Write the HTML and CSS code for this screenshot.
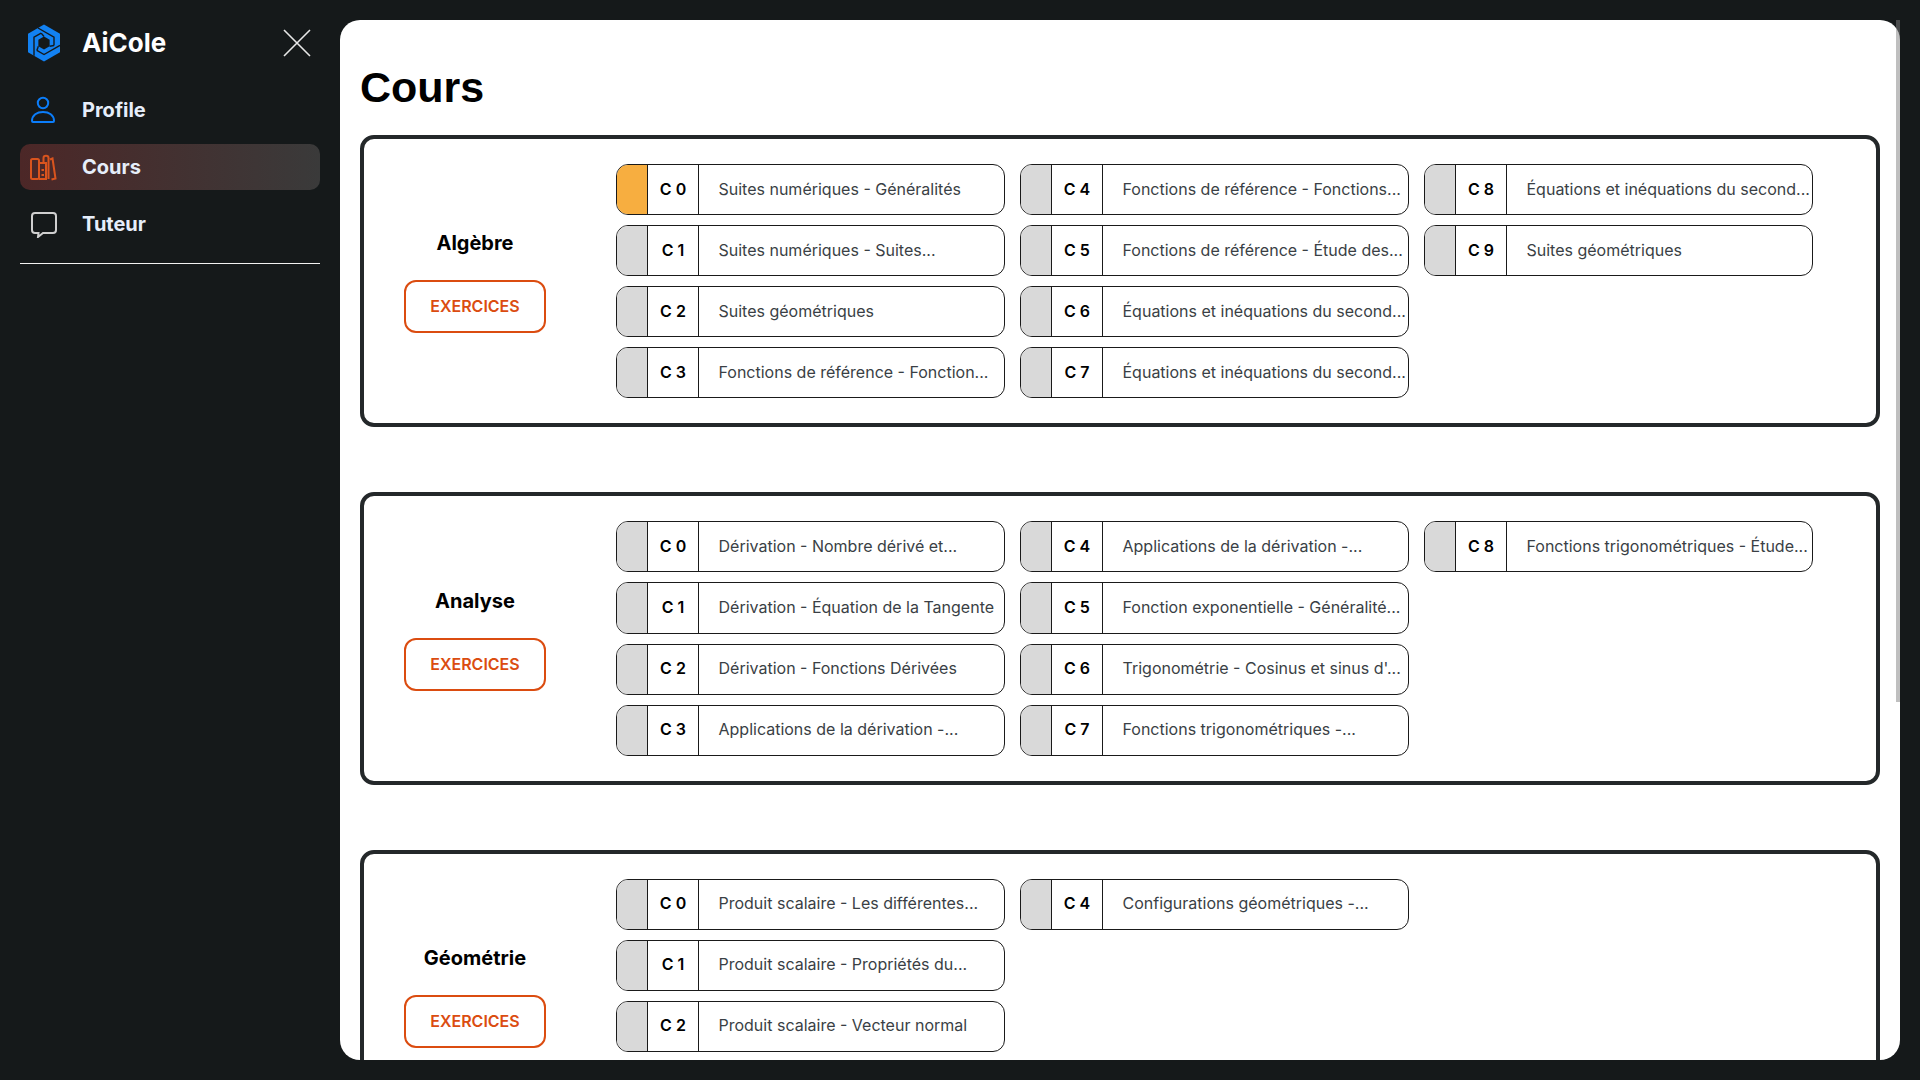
FILE: index.html
```html
<!DOCTYPE html>
<html lang="fr">
<head>
<meta charset="utf-8">
<title>AiCole - Cours</title>
<link rel="stylesheet" href="styles.css">
</head>
<body>
<aside class="sidebar">
  <header class="brand">
    <svg class="logo" viewBox="-20 -20 40 40" aria-hidden="true">
      <path class="logo-hex" d="M0-18.500 16-9.250V9.250L0 18.500-16 9.250V-9.250Z"/>
      <path class="logo-hole" d="M0-6.500 5.630-3.250V3.250L0 6.500-5.630 3.250V-3.250Z"/>
      <g class="logo-slit">
        <path d="M-6-15 10-5.800V2.500"/>
        <path d="M-6-15 10-5.800V2.500" transform="rotate(120)"/>
        <path d="M-6-15 10-5.800V2.500" transform="rotate(240)"/>
        <path d="M10 2.500 5.630 3.250"/>
        <path d="M10 2.500 5.630 3.250" transform="rotate(120)"/>
        <path d="M10 2.500 5.630 3.250" transform="rotate(240)"/>
      </g>
    </svg>
    <span class="brand-name">AiCole</span>
    <svg class="close" viewBox="0 0 28 28" aria-hidden="true"><path d="M1 1 27 27M27 1 1 27"/></svg>
  </header>
  <nav class="nav">
    <a class="nav-row">
      <svg class="nav-icon icon-blue" viewBox="0 0 28 28" aria-hidden="true"><circle cx="14" cy="7" r="5.200"/><path d="M3 25c0-6 5-9 11-9s11 3 11 9c0 .6-.4 1-1 1H4c-.6 0-1-.4-1-1Z"/></svg>
      <span>Profile</span>
    </a>
    <a class="nav-row active">
      <svg class="nav-icon icon-orange" viewBox="0 0 28 28" aria-hidden="true"><rect x="2" y="6" width="8" height="20" rx="1.500"/><path d="M10 10h7v16h-7M12.500 17h2.500M12.500 22h2.500"/><path d="M14.500 10V5c0-3 5-3 5 0v21M21 6.500l2.500-1 3 20-4 1"/></svg>
      <span>Cours</span>
    </a>
    <a class="nav-row">
      <svg class="nav-icon icon-grey" viewBox="0 0 28 28" aria-hidden="true"><path d="M6 3h18c2 0 3 1 3 3v14c0 2-1 3-3 3H14l-5 4 .500-4H6c-2 0-3-1-3-3V6c0-2 1-3 3-3Z"/></svg>
      <span>Tuteur</span>
    </a>
  </nav>
  <hr class="rule">
</aside>
<div class="panel-wrap">
  <main class="panel">
    <h1 class="title">Cours</h1>

    <section class="card">
      <div class="card-side"><h2 class="card-name">Algèbre</h2><a class="btn">EXERCICES</a></div>
      <div class="items">
        <div class="item"><i class="swatch current"></i><b class="code">C 0</b><span class="label">Suites numériques - Généralités</span></div>
        <div class="item"><i class="swatch"></i><b class="code">C 1</b><span class="label">Suites numériques - Suites...</span></div>
        <div class="item"><i class="swatch"></i><b class="code">C 2</b><span class="label">Suites géométriques</span></div>
        <div class="item"><i class="swatch"></i><b class="code">C 3</b><span class="label">Fonctions de référence - Fonction...</span></div>
        <div class="item"><i class="swatch"></i><b class="code">C 4</b><span class="label">Fonctions de référence - Fonctions...</span></div>
        <div class="item"><i class="swatch"></i><b class="code">C 5</b><span class="label">Fonctions de référence - Étude des...</span></div>
        <div class="item"><i class="swatch"></i><b class="code">C 6</b><span class="label">Équations et inéquations du second...</span></div>
        <div class="item"><i class="swatch"></i><b class="code">C 7</b><span class="label">Équations et inéquations du second...</span></div>
        <div class="item"><i class="swatch"></i><b class="code">C 8</b><span class="label">Équations et inéquations du second...</span></div>
        <div class="item"><i class="swatch"></i><b class="code">C 9</b><span class="label">Suites géométriques</span></div>
      </div>
    </section>

    <section class="card">
      <div class="card-side"><h2 class="card-name">Analyse</h2><a class="btn">EXERCICES</a></div>
      <div class="items">
        <div class="item"><i class="swatch"></i><b class="code">C 0</b><span class="label">Dérivation - Nombre dérivé et...</span></div>
        <div class="item"><i class="swatch"></i><b class="code">C 1</b><span class="label">Dérivation - Équation de la Tangente</span></div>
        <div class="item"><i class="swatch"></i><b class="code">C 2</b><span class="label">Dérivation - Fonctions Dérivées</span></div>
        <div class="item"><i class="swatch"></i><b class="code">C 3</b><span class="label">Applications de la dérivation -...</span></div>
        <div class="item"><i class="swatch"></i><b class="code">C 4</b><span class="label">Applications de la dérivation -...</span></div>
        <div class="item"><i class="swatch"></i><b class="code">C 5</b><span class="label">Fonction exponentielle - Généralité...</span></div>
        <div class="item"><i class="swatch"></i><b class="code">C 6</b><span class="label">Trigonométrie - Cosinus et sinus d'...</span></div>
        <div class="item"><i class="swatch"></i><b class="code">C 7</b><span class="label">Fonctions trigonométriques -...</span></div>
        <div class="item"><i class="swatch"></i><b class="code">C 8</b><span class="label">Fonctions trigonométriques - Étude...</span></div>
      </div>
    </section>

    <section class="card">
      <div class="card-side"><h2 class="card-name">Géométrie</h2><a class="btn">EXERCICES</a></div>
      <div class="items">
        <div class="item"><i class="swatch"></i><b class="code">C 0</b><span class="label">Produit scalaire - Les différentes...</span></div>
        <div class="item"><i class="swatch"></i><b class="code">C 1</b><span class="label">Produit scalaire - Propriétés du...</span></div>
        <div class="item"><i class="swatch"></i><b class="code">C 2</b><span class="label">Produit scalaire - Vecteur normal</span></div>
        <div class="item row-start"><i class="swatch"></i><b class="code">C 4</b><span class="label">Configurations géométriques -...</span></div>
      </div>
    </section>
  </main>
  <div class="scroll-thumb"></div>
</div>
</body>
</html>
```
FILE: styles.css
```css
* { box-sizing: border-box; }
html, body { height: 100%; }
body {
  margin: 0;
  display: flex;
  height: 100vh;
  overflow: hidden;
  padding: 20px 20px 20px 0;
  background: #15191a;
  font-family: Inter, "Noto Sans", sans-serif;
}
.sidebar {
  width: 340px;
  flex: none;
  padding: 0 20px;
  margin-top: -20px;
}
.brand {
  display: flex;
  align-items: center;
  height: 86px;
  padding-left: 3.5px;
}
.logo { width: 40px; height: 40px; flex: none; }
.logo-hex { fill: #1281f2; }
.logo-hole { fill: #15191a; }
.logo-slit path { fill: none; stroke: #15191a; stroke-width: 1.4; }
.brand-name {
  margin-left: 18.5px;
  padding-bottom: 2px;
  font-size: 26px;
  font-weight: 700;
  color: #fff;
}
.close {
  width: 28px;
  height: 28px;
  margin-left: auto;
  margin-right: 9px;
  fill: none;
  stroke: #e8e8e8;
  stroke-width: 1.6;
}
.nav { display: flex; flex-direction: column; gap: 11px; margin-top: 1px; }
.nav-row {
  display: flex;
  align-items: center;
  height: 46px;
  padding-left: 9px;
  gap: 25px;
  border-radius: 10px;
  font-size: 20px;
  font-weight: 700;
  color: #e6eefa;
}
.nav-row.active { background: linear-gradient(90deg, #4c2727, #3a3a3a); }
.nav-icon { width: 28px; height: 28px; flex: none; fill: none; stroke-width: 2; }
.icon-blue { stroke: #0b7dfa; }
.icon-orange { stroke: #d9541e; }
.icon-grey { stroke: #cfcfcf; }
.rule { border: 0; height: 1px; background: #f2f2f2; margin: 16px 0 0; }

.panel-wrap {
  position: relative;
  flex: 1;
  min-width: 0;
  height: 100%;
}
.panel {
  height: 100%;
  overflow: hidden;
  padding: 40px 20px 0;
  background: #fff;
  border-radius: 20px;
}
.scroll-thumb {
  position: absolute;
  top: 0;
  right: 0;
  width: 4px;
  height: 682px;
  background: rgba(128, 128, 128, .5);
}
.title {
  margin: 0 0 20px;
  height: 55px;
  font: 700 43px/55px "Liberation Sans", Arial, sans-serif;
  color: #000;
}
.card {
  display: flex;
  gap: 55px;
  height: 292.4px;
  margin-bottom: 64.95px;
  padding: 25px;
  border: 4px solid #24282a;
  border-radius: 14px;
}
.card-side {
  width: 172px;
  flex: none;
  display: flex;
  flex-direction: column;
  align-items: center;
  justify-content: center;
  gap: 25px;
  padding-top: 2px;
}
.card-name { margin: 0; font-size: 20px; font-weight: 700; color: #000; }
.btn {
  display: flex;
  align-items: center;
  justify-content: center;
  width: 142px;
  height: 53px;
  padding-bottom: 1px;
  border: 2px solid #db4c10;
  border-radius: 12px;
  font-size: 16px;
  font-weight: 600;
  color: #db4c10;
}
.items {
  display: grid;
  grid-auto-flow: column;
  grid-template-rows: repeat(4, 51.1px);
  grid-auto-columns: 389px;
  gap: 10px 15px;
}
.row-start { grid-row: 1; }
.item {
  display: flex;
  align-items: stretch;
  border: 1px solid #1a1a1a;
  border-radius: 12px;
  overflow: hidden;
}
.swatch { width: 30px; flex: none; background: #d9d9d9; }
.swatch.current { background: #f7ae40; }
.code {
  box-sizing: content-box;
  width: 50px;
  flex: none;
  display: flex;
  align-items: center;
  justify-content: center;
  padding-bottom: 2px;
  border-left: 1px solid #1a1a1a;
  border-right: 1px solid #1a1a1a;
  font-size: 16px;
  font-weight: 600;
  color: #000;
}
.label {
  display: flex;
  align-items: center;
  padding: 0 0 2px 19.5px;
  font-size: 16px;
  white-space: nowrap;
  color: #3a3f45;
}
```
